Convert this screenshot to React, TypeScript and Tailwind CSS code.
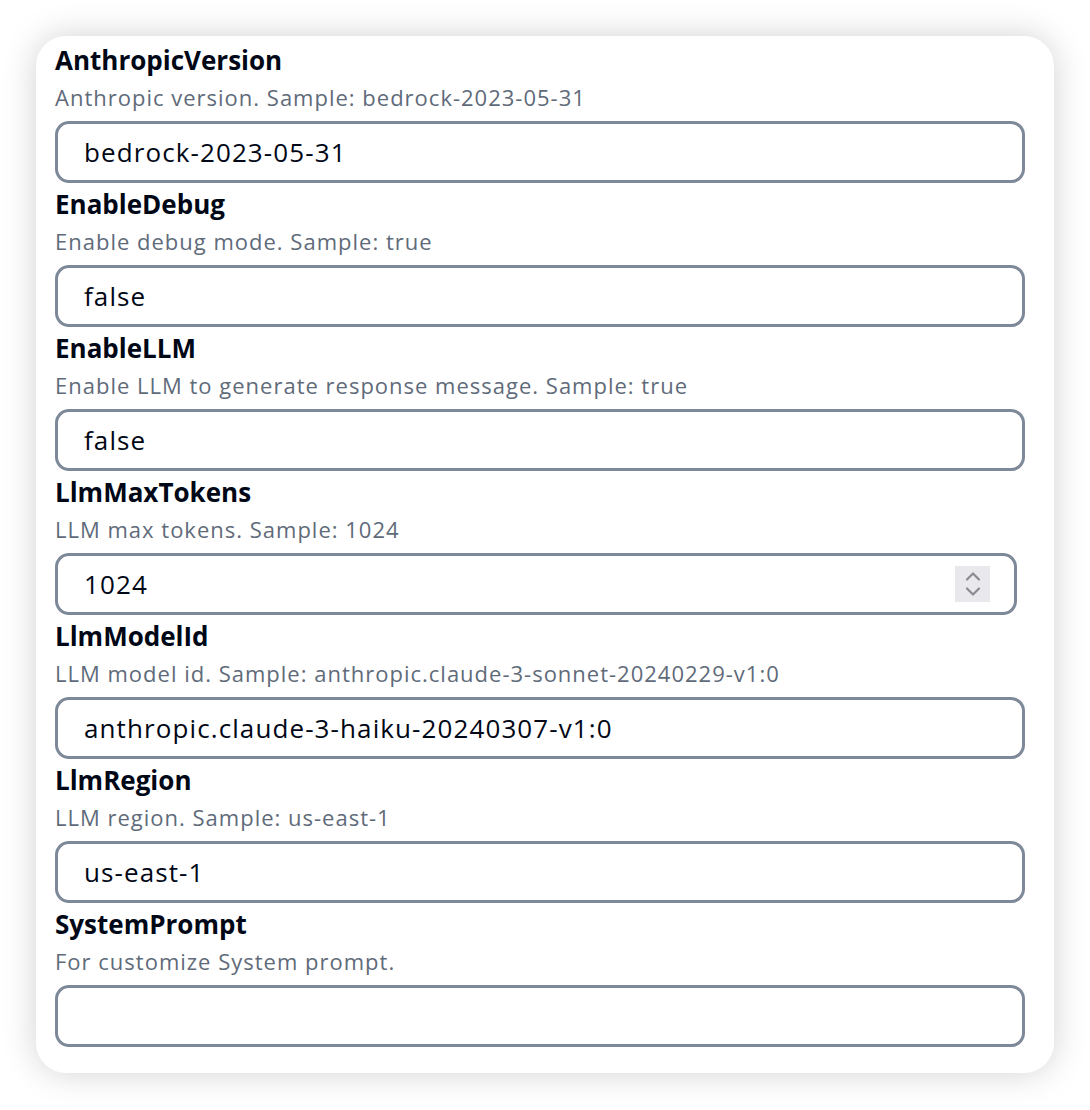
import React from 'react';

type Field = {
  name: string;
  description: string;
  value: string;
  kind?: 'number';
};

const fields: Field[] = [
  { name: 'AnthropicVersion', description: 'Anthropic version. Sample: bedrock-2023-05-31', value: 'bedrock-2023-05-31' },
  { name: 'EnableDebug', description: 'Enable debug mode. Sample: true', value: 'false' },
  { name: 'EnableLLM', description: 'Enable LLM to generate response message. Sample: true', value: 'false' },
  { name: 'LlmMaxTokens', description: 'LLM max tokens. Sample: 1024', value: '1024', kind: 'number' },
  { name: 'LlmModelId', description: 'LLM model id. Sample: anthropic.claude-3-sonnet-20240229-v1:0', value: 'anthropic.claude-3-haiku-20240307-v1:0' },
  { name: 'LlmRegion', description: 'LLM region. Sample: us-east-1', value: 'us-east-1' },
  { name: 'SystemPrompt', description: 'For customize System prompt.', value: '' },
];

function Spinner() {
  return (
    <div className="flex h-[36px] w-[35px] flex-col items-center justify-center gap-[6px] bg-[#e9e9ed]">
      <svg width="16" height="9" viewBox="0 0 16 9" fill="none" stroke="#8a8a93" strokeWidth="2.2" strokeLinecap="round" strokeLinejoin="round">
        <path d="M2 7.5 L8 1.5 L14 7.5" />
      </svg>
      <svg width="16" height="9" viewBox="0 0 16 9" fill="none" stroke="#8a8a93" strokeWidth="2.2" strokeLinecap="round" strokeLinejoin="round">
        <path d="M2 1.5 L8 7.5 L14 1.5" />
      </svg>
    </div>
  );
}

function FieldRow({ field, first }: { field: Field; first: boolean }) {
  return (
    <div className={first ? '' : 'mt-[6px]'}>
      <div className="h-[30px] text-[26px] font-bold leading-[30px] text-[#000716]">{field.name}</div>
      <div className="mt-[10px] h-[24px] whitespace-nowrap text-[22px] font-medium leading-[24px] tracking-[1px] text-[#5f6b7a]">
        {field.description}
      </div>
      <div
        className={
          'mt-[12px] flex h-[62px] items-center rounded-[14px] border-[3px] border-[#7d8998] bg-white pl-[26px] ' +
          (field.kind === 'number' ? 'mr-[8px] pr-[24px]' : 'pr-[20px]')
        }
      >
        <span className="flex-1 text-[26px] tracking-[1.1px] text-[#000716]">{field.value}</span>
        {field.kind === 'number' && <Spinner />}
      </div>
    </div>
  );
}

export default function App() {
  return (
    <div className="min-h-[1110px] w-[1090px] bg-white p-[36px]" style={{ fontFamily: '"Open Sans", "Noto Sans", sans-serif' }}>
      <div className="w-[1018px] rounded-[30px] bg-white pb-[26px] pl-[19px] pr-[29px] pt-[9px] shadow-[0_0_34px_rgba(0,0,0,0.18)]">
        {fields.map((f, i) => (
          <FieldRow key={f.name} field={f} first={i === 0} />
        ))}
      </div>
    </div>
  );
}
